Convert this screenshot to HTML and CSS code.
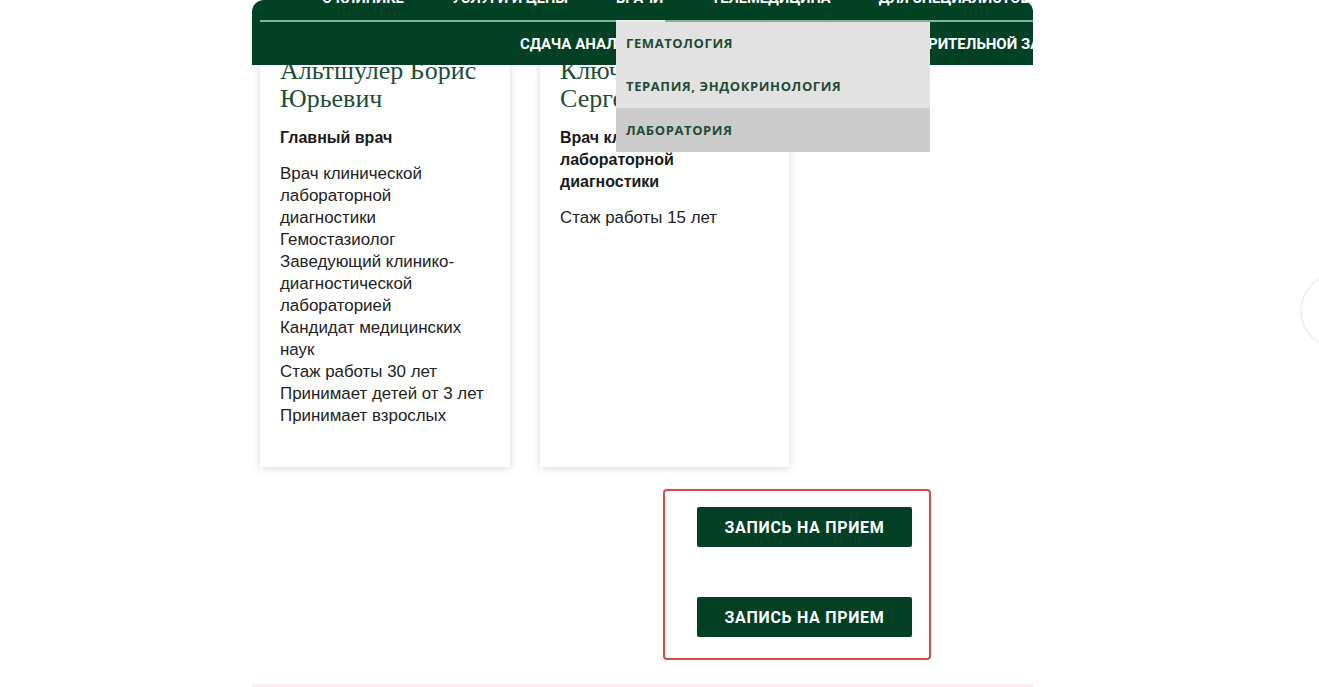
FILE: index.html
```html
<!DOCTYPE html>
<html lang="ru">
<head>
<meta charset="utf-8">
<title>Врачи</title>
<link rel="stylesheet" href="styles.css">
</head>
<body>
<div class="page">
  <header class="header">
    <nav class="nav-top">
      <a class="nav-item">О клинике</a>
      <a class="nav-item">Услуги и цены</a>
      <a class="nav-item nav-item--active">Врачи
        <ul class="dropdown">
          <li class="dropdown-item">Гематология</li>
          <li class="dropdown-item">Терапия, эндокринология</li>
          <li class="dropdown-item dropdown-item--hover">Лаборатория</li>
        </ul>
      </a>
      <a class="nav-item">Телемедицина</a>
      <a class="nav-item">Для специалистов</a>
    </nav>
    <div class="nav-bottom">
      <span class="promo">Сдача анализов на антитела COVID-19 без предварительной записи</span>
    </div>
  </header>

  <section class="cards">
    <article class="card">
      <h3 class="card-name">Альтшулер Борис Юрьевич</h3>
      <p class="card-role">Главный врач</p>
      <p class="card-text">Врач клинической лабораторной диагностики<br>Гемостазиолог<br>Заведующий клинико-диагностической лабораторией<br>Кандидат медицинских наук<br>Стаж работы 30 лет<br>Принимает детей от 3 лет<br>Принимает взрослых</p>
    </article>
    <article class="card">
      <h3 class="card-name">Ключников Сергей Ильич</h3>
      <p class="card-role">Врач клинической лабораторной диагностики</p>
      <p class="card-text">Стаж работы 15 лет</p>
    </article>
  </section>

  <div class="booking">
    <button class="btn">Запись на прием</button>
    <button class="btn">Запись на прием</button>
  </div>

  <div class="footer-line"></div>
</div>
<div class="side-circle"></div>
</body>
</html>
```

FILE: styles.css
```css
* { box-sizing: border-box; }

html, body {
  margin: 0;
  padding: 0;
  background: #ffffff;
  overflow: hidden;
}

body {
  font-family: "Liberation Sans", Arial, sans-serif;
  color: #222;
  height: 687px;
}

.page {
  width: 781px;
  margin-left: 252px;
}

.header {
  position: relative;
  z-index: 5;
  background: #034125;
  border-radius: 12px 12px 0 0;
  height: 65px;
}

.nav-top {
  display: flex;
  gap: 48px;
  height: 22px;
  padding-left: 62px;
  margin-left: 8px;
  border-bottom: 2px solid #7fb596;
  white-space: nowrap;
}

.nav-item {
  position: relative;
  font-family: Roboto, "Liberation Sans", sans-serif;
  font-weight: 700;
  font-size: 14.6px;
  line-height: 16px;
  margin-top: -10px;
  color: #ffffff;
  text-transform: uppercase;
  text-decoration: none;
  height: 32px;
}

.nav-item--active::after {
  content: "";
  position: absolute;
  left: 0;
  right: -2px;
  top: 30px;
  height: 2px;
  background: #e8efe9;
}

.dropdown {
  position: absolute;
  left: 0;
  top: 32px;
  width: 314px;
  margin: 0;
  padding: 0;
  list-style: none;
  background: #e2e2e2;
  z-index: 10;
}

.dropdown-item {
  height: 44px;
  display: flex;
  align-items: center;
  padding-left: 10px;
  font-family: "Open Sans", sans-serif;
  font-weight: 700;
  font-size: 13px;
  letter-spacing: 0.6px;
  color: #1f4a34;
  text-transform: uppercase;
}

.dropdown-item:first-child { height: 42px; }

.dropdown-item--hover { background: #cbcbcb; }

.nav-bottom {
  height: 43px;
  padding-left: 268px;
  display: flex;
  align-items: center;
  overflow: hidden;
  white-space: nowrap;
}

.promo {
  font-family: Roboto, "Liberation Sans", sans-serif;
  font-weight: 700;
  font-size: 15px;
  color: #ffffff;
  text-transform: uppercase;
}

.cards {
  display: flex;
  gap: 30px;
  padding-left: 8px;
  margin-top: -28px;
}

.card {
  width: 250px;
  background: #fff;
  box-shadow: 0 1px 8px rgba(0, 0, 0, 0.16);
  padding: 20px 20px 40px 20px;
}

.card:last-child { width: 249px; }

.card-name {
  margin: 0 0 14px 0;
  font-family: "Liberation Serif", "Times New Roman", serif;
  font-weight: 400;
  font-size: 26px;
  line-height: 28px;
  color: #1d4e36;
}

.card-role {
  margin: 0 0 14px 0;
  font-weight: 700;
  font-size: 16px;
  line-height: 22px;
  color: #1a1a1a;
}

.card-text {
  margin: 0;
  font-size: 16.9px;
  line-height: 22px;
  color: #222;
}

.booking {
  margin-top: 22px;
  margin-left: 411px;
  width: 268px;
  height: 171px;
  border: 2px solid #dc4a48;
  border-radius: 4px;
  padding: 16px 0 0 32px;
  display: flex;
  flex-direction: column;
  gap: 50px;
}

.btn {
  width: 215px;
  height: 40px;
  border: none;
  border-radius: 2px;
  background: #033f24;
  color: #fff;
  font-family: Roboto, "Liberation Sans", sans-serif;
  font-weight: 700;
  font-size: 16px;
  letter-spacing: 0.7px;
  text-transform: uppercase;
  cursor: pointer;
}

.footer-line {
  margin-top: 24px;
  height: 3px;
  background: #fcefef;
}

.side-circle {
  position: absolute;
  left: 1300px;
  top: 273px;
  width: 76px;
  height: 76px;
  border-radius: 50%;
  border: 2px solid #f5eeee;
}
```
